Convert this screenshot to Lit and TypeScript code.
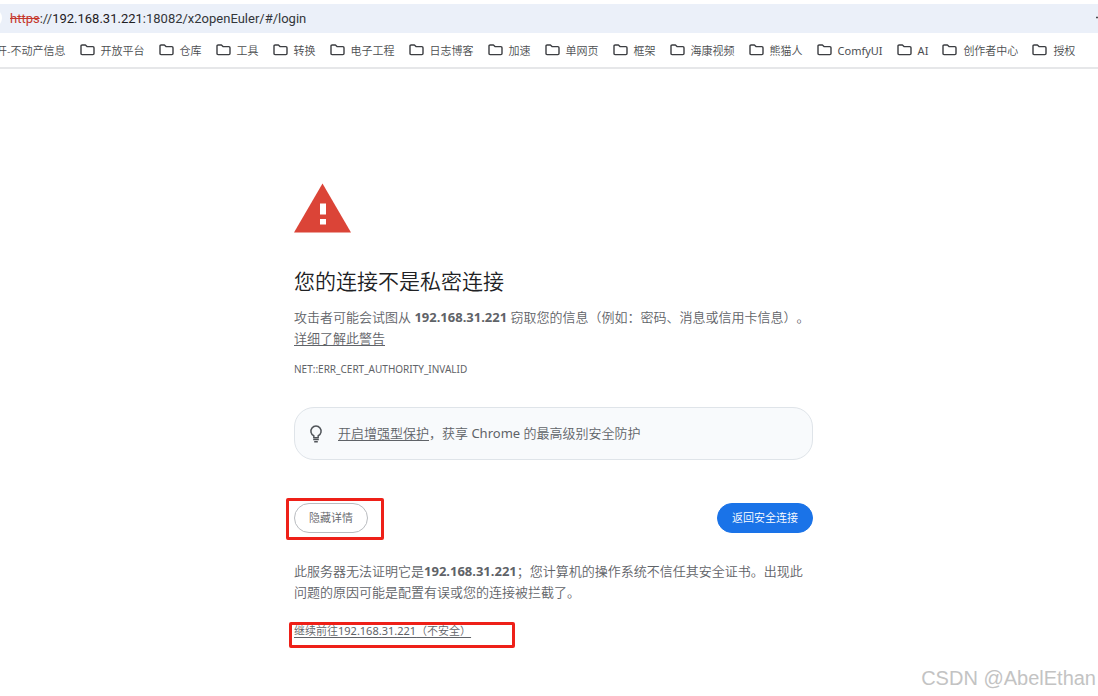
import { LitElement, css, html } from "lit";
import { customElement } from "lit/decorators.js";
import { classMap } from "lit/directives/class-map.js";

const BOOKMARKS = [
  "开放平台", "仓库", "工具", "转换", "电子工程", "日志博客", "加速", "单网页",
  "框架", "海康视频", "熊猫人", "ComfyUI", "AI", "创作者中心", "授权",
];

@customElement("browser-chrome")
class BrowserChrome extends LitElement {
  static styles = css`
    :host { display: block; border-bottom: 2px solid #e6e7e9; }
    .address {
      display: flex;
      align-items: center;
      justify-content: space-between;
      height: 29px;
      margin-top: 4px;
      padding-left: 10px;
      background: #ebf0f9;
      position: relative;
      overflow: hidden;
      font-size: 13px;
      font-weight: 400;
      font-family: Roboto, "Noto Sans", sans-serif;
      line-height: 18px;
      color: #33363a;
    }
    .chip {
      position: absolute;
      left: -18px;
      top: 4px;
      width: 20px;
      height: 20px;
      border-radius: 50%;
      background: #fff;
    }
    .scheme { color: #c5372c; text-decoration: line-through; }
    .host { color: #1f2023; }
    .star { width: 2px; height: 16px; }
    .bookmarks {
      display: flex;
      align-items: center;
      gap: 14px;
      height: 34px;
      margin-left: -4px;
      overflow: hidden;
      white-space: nowrap;
      font-size: 11px;
    }
    a {
      display: flex;
      flex: none;
      align-items: center;
      gap: 6px;
      color: #4b4d50;
      text-decoration: none;
    }
    .latin { font-weight: 400; }
    .folder { width: 15px; height: 12px; flex: none; }
  `;

  render() {
    return html`
      <div class="address">
        <span class="chip"></span>
        <span><span class="scheme">https</span>://<span class="host">192.168.31.221</span>:18082/x2openEuler/#/login</span>
        <svg class="star" viewBox="0 0 2 16" aria-hidden="true">
          <path d="M0 6.5h2" stroke="#47494d" stroke-width="1.4" />
        </svg>
      </div>
      <nav class="bookmarks">
        <a href="#">开-不动产信息</a>
        ${BOOKMARKS.map((name) => html`
          <a href="#" class=${classMap({ latin: /^[A-Za-z]+$/.test(name) })}>
            <svg class="folder" viewBox="0 0 15 12" fill="none" stroke="#3c3e42" stroke-width="1.4" stroke-linejoin="round" aria-hidden="true">
              <path d="M1 2.1Q1 1 2.1 1H5.4L7 2.6H12.9Q14 2.6 14 3.7V9.5Q14 10.6 12.9 10.6H2.1Q1 10.6 1 9.5Z" />
            </svg>${name}
          </a>`)}
      </nav>
    `;
  }
}

@customElement("privacy-warning")
class PrivacyWarning extends LitElement {
  static styles = css`
    :host {
      display: block;
      box-sizing: border-box;
      max-width: 519px;
      margin: 0 auto;
      padding-top: 114px;
      font-size: 13px;
      line-height: 21px;
      color: #5f6368;
    }
    a { color: inherit; text-underline-offset: 2px; }
    p { margin: 0; }
    strong { font-weight: 700; }
    .latin { font-weight: 400; }
    .warning { display: block; width: 58px; height: 50px; }
    h1 {
      margin: 32px 0 10px;
      font-size: 21px;
      line-height: 32px;
      font-weight: 350;
      color: #202124;
    }
    .code { margin-top: 10px; font-size: 10px; }
    .tip {
      display: flex;
      align-items: center;
      gap: 14px;
      margin-top: 27px;
      padding: 15px 14px;
      border: 1px solid #dfe4e9;
      border-radius: 20px;
      background: #f8fafc;
    }
    .bulb { width: 15px; height: 18px; flex: none; }
    .actions {
      display: flex;
      justify-content: space-between;
      align-items: center;
      margin-top: 43px;
    }
    button {
      height: 30px;
      padding: 0 14px;
      border: 1px solid #b9bcc0;
      border-radius: 15px;
      background: #fff;
      color: #5f6368;
      font: inherit;
      font-size: 11px;
      line-height: 16px;
    }
    .primary { border-color: #1a73e8; background: #1a73e8; color: #fff; }
    .details { margin-top: 28px; }
    .marked { position: relative; }
    .marked::after {
      content: "";
      position: absolute;
      border: 3px solid #ee2018;
      border-radius: 2px;
      pointer-events: none;
    }
    .around-button::after { inset: -5px -16px -7px -8px; }
    .proceed { width: fit-content; margin-top: 17px; font-size: 11px; }
    .proceed::after { inset: 2px -44px -7px -5px; }
  `;

  render() {
    return html`
      <svg class="warning" viewBox="0 0 58 50" role="img" aria-label="警告">
        <path d="M28.5 0.5L57 49.5H0Z" fill="#db4437" />
        <path d="M26 20.5h6v11h-6zM26 36h6v5.500h-6z" fill="#fff" />
      </svg>
      <h1>您的连接不是私密连接</h1>
      <p>攻击者可能会试图从 <strong>192.168.31.221</strong> 窃取您的信息（例如：密码、消息或信用卡信息）。<a href="#">详细了解此警告</a></p>
      <p class="code latin">NET::ERR_CERT_AUTHORITY_INVALID</p>
      <div class="tip">
        <svg class="bulb" viewBox="0 0 15 18" fill="none" stroke="#505459" stroke-width="1.500" aria-hidden="true">
          <path d="M4.800 12.700V10.800A5.100 5.100 0 1 1 9.200 10.800V12.700Z" stroke-linejoin="round" />
          <path d="M4.200 14.600h5.600M5.200 16.700h3.600" />
        </svg>
        <p><a href="#">开启增强型保护</a>，获享 <span class="latin">Chrome</span> 的最高级别安全防护</p>
      </div>
      <div class="actions">
        <span class="marked around-button"><button type="button">隐藏详情</button></span>
        <button class="primary" type="button">返回安全连接</button>
      </div>
      <p class="details">此服务器无法证明它是<strong>192.168.31.221</strong>；您计算机的操作系统不信任其安全证书。出现此问题的原因可能是配置有误或您的连接被拦截了。</p>
      <p class="marked proceed"><a href="#">继续前往<span class="latin">192.168.31.221</span>（不安全）</a></p>
    `;
  }
}

@customElement("app-root")
class AppRoot extends LitElement {
  static styles = css`
    :host {
      display: flow-root;
      position: relative;
      min-height: 100vh;
      background: #fff;
      font-family: "Noto Sans", "Noto Sans CJK SC", sans-serif;
      font-weight: 350;
      text-spacing-trim: space-all;
    }
    main { padding: 0 16px 0 25px; }
    .watermark {
      position: absolute;
      right: 2px;
      bottom: 5px;
      font: 20px/26px "Liberation Sans", sans-serif;
      color: #c3c3c3;
    }
  `;

  render() {
    return html`
      <browser-chrome></browser-chrome>
      <main lang="zh-CN"><privacy-warning></privacy-warning></main>
      <span class="watermark">CSDN @AbelEthan</span>
    `;
  }
}
